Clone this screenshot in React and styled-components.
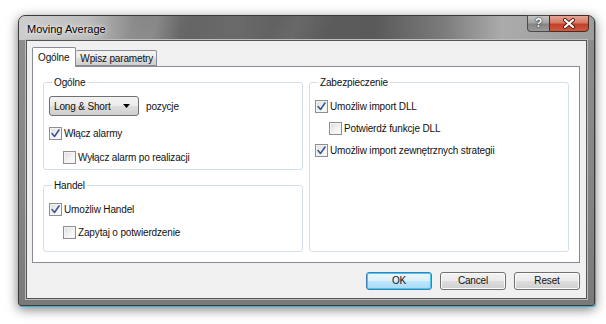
import React from 'react'
import styled, { createGlobalStyle } from 'styled-components';

const GlobalStyle = createGlobalStyle`
  html, body {
    margin: 0;
    background: #ffffff;
  }
  body {
    font-family: "Liberation Sans", Arial, sans-serif;
    font-size: 10px;
    letter-spacing: -0.15px;
    color: #111;
  }
`

const CheckMark = () => (
    <svg width="9" height="9" viewBox="0 0 9 9">
        <path d="M1 4.5 L3.5 7.5 L8 1" fill="none" stroke="#3c5894" strokeWidth="1.6" strokeLinecap="round" strokeLinejoin="round" />
    </svg>
)

const CheckBox = ({ checked, label, indent }) => (
    <CheckRow $indent={indent}>
        <Box>{checked && <CheckMark />}</Box>
        <span>{label}</span>
    </CheckRow>
)

const App = () => {
  return (
    <Page>
        <GlobalStyle />
        <Window>
            <TitleBar>
                <Title>Moving Average</Title>
                <CaptionButtons>
                    <HelpButton>?</HelpButton>
                    <CloseButton>
                        <svg width="14" height="11" viewBox="0 0 14 11">
                            <path d="M3 2 L11 9 M11 2 L3 9" stroke="#5a1a10" strokeWidth="4" strokeLinecap="round" />
                            <path d="M3 2 L11 9 M11 2 L3 9" stroke="#ffffff" strokeWidth="2.2" strokeLinecap="round" />
                        </svg>
                    </CloseButton>
                </CaptionButtons>
            </TitleBar>

            <Client>
                <TabStrip>
                    <Tab $active>Ogólne</Tab>
                    <Tab>Wpisz parametry</Tab>
                </TabStrip>

                <TabPanel>
                    <Column>
                        <Group $height={93} $pad={8} $gap={11}>
                            <legend>Ogólne</legend>
                            <ComboRow>
                                <Combo>
                                    <span>Long &amp; Short</span>
                                    <svg width="7" height="4" viewBox="0 0 7 4">
                                        <path d="M0 0 H7 L3.5 4 Z" fill="#000" />
                                    </svg>
                                </Combo>
                                <span>pozycje</span>
                            </ComboRow>
                            <CheckBox checked label="Włącz alarmy" />
                            <CheckBox indent label="Wyłącz alarm po realizacji" />
                        </Group>

                        <Group $height={72} $pad={12} $gap={10}>
                            <legend>Handel</legend>
                            <CheckBox checked label="Umożliw Handel" />
                            <CheckBox indent label="Zapytaj o potwierdzenie" />
                        </Group>
                    </Column>

                    <Column>
                        <Group $height={175} $pad={12} $gap={9}>
                            <legend>Zabezpieczenie</legend>
                            <CheckBox checked label="Umożliw import DLL" />
                            <CheckBox indent label="Potwierdź funkcje DLL" />
                            <CheckBox checked label="Umożliw import zewnętrznych strategii" />
                        </Group>
                    </Column>
                </TabPanel>

                <ButtonRow>
                    <Button $default>OK</Button>
                    <Button>Cancel</Button>
                    <Button>Reset</Button>
                </ButtonRow>
            </Client>
        </Window>
    </Page>
  )
}

export default App;

const Page = styled.div`
    width: 606px;
    height: 324px;
    box-sizing: border-box;
    padding: 15px 0 0 18px;
    overflow: hidden;
`

const Window = styled.div`
    width: 577px;
    height: 291px;
    box-sizing: border-box;
    display: flex;
    flex-direction: column;
    border: 1px solid #3a3a3a;
    border-radius: 7px 7px 3px 3px;
    background: linear-gradient(180deg, #8e8e8e 0%, #858585 60%, #7a7a7a 100%);
    box-shadow: 1px 1px 0 0 #3fb2d2, 0 3px 12px rgba(0, 0, 0, 0.55);
`

const TitleBar = styled.div`
    height: 24px;
    flex: none;
    display: flex;
    justify-content: space-between;
    align-items: flex-start;
    padding-left: 8px;
    border-radius: 6px 6px 0 0;
    background:
        linear-gradient(110deg, transparent 20%, rgba(255,255,255,0.12) 24%, transparent 30%, transparent 44%, rgba(255,255,255,0.08) 48%, transparent 54%),
        linear-gradient(90deg, #cdcdcd 0%, #bcbcbc 12%, #8a8a8a 20%, #646464 28%, #6a6a6a 38%, #5c5c5c 48%, #5a5a5a 62%, #7c7c7c 74%, #ababab 84%, #9c9c9c 100%);
`

const Title = styled.div`
    font-size: 11px;
    letter-spacing: 0;
    line-height: 24px;
    padding-top: 1px;
    color: #000;
    text-shadow: 0 0 6px rgba(255,255,255,0.9), 0 0 3px rgba(255,255,255,0.8);
`

const CaptionButtons = styled.div`
    display: flex;
    margin-right: 5px;
    margin-top: -1px;
`

const HelpButton = styled.div`
    width: 22px;
    height: 17px;
    box-sizing: border-box;
    border: 1px solid #4a4a4a;
    border-right: none;
    border-radius: 0 0 0 4px;
    background: linear-gradient(180deg, #c4c4c4 0%, #a4a4a4 45%, #858585 55%, #9a9a9a 100%);
    color: #fff;
    font-weight: bold;
    font-size: 12px;
    line-height: 15px;
    text-align: center;
    text-shadow: 0 0 2px #222, 0 0 1px #222;
`

const CloseButton = styled.div`
    width: 40px;
    height: 17px;
    box-sizing: border-box;
    border: 1px solid #4a2a24;
    border-radius: 0 0 4px 0;
    background: linear-gradient(180deg, #e4a494 0%, #d77a62 45%, #c2402a 55%, #cf5a3c 100%);
    display: grid;
    place-items: center;
`

const Client = styled.div`
    flex: 1;
    margin: 0 7px 6px 7px;
    display: flex;
    flex-direction: column;
    padding: 6px 6px 8px 5px;
    background: #f0f0f0;
    border: 1px solid #555;
    box-shadow: 0 0 0 1px #bdbdbd;
`

const TabStrip = styled.div`
    height: 19px;
    display: flex;
    align-items: flex-end;
    position: relative;
    z-index: 1;
`

const Tab = styled.div`
    box-sizing: border-box;
    height: ${(props) => (props.$active ? "20px" : "16px")};
    margin-bottom: ${(props) => (props.$active ? "-1px" : "0")};
    padding: ${(props) => (props.$active ? "3px 6px 0 5px" : "1px 3px 0 4px")};
    border: 1px solid #898c95;
    border-bottom: ${(props) => (props.$active ? "none" : "1px solid #898c95")};
    border-left: ${(props) => (props.$active ? "1px solid #898c95" : "none")};
    border-radius: 2px 2px 0 0;
    background: ${(props) => (props.$active ? "#ffffff" : "linear-gradient(180deg, #f3f3f3 0%, #ebebeb 50%, #dddddd 51%, #cfcfcf 100%)")};
    line-height: 13px;
`

const TabPanel = styled.div`
    width: 548px;
    height: 197px;
    box-sizing: border-box;
    border: 1px solid #898c95;
    background: #ffffff;
    padding: 10px 0 0 10px;
    display: grid;
    grid-template-columns: 260px 260px;
    column-gap: 6px;
    align-items: start;
`

const Column = styled.div`
    display: flex;
    flex-direction: column;
    gap: 10px;
`

const Group = styled.fieldset`
    box-sizing: border-box;
    height: ${(props) => props.$height}px;
    margin: 0;
    min-width: 0;
    padding: ${(props) => props.$pad}px 5px 0 5px;
    border: 1px solid #d5dfe5;
    border-radius: 3px;
    display: flex;
    flex-direction: column;
    align-items: flex-start;
    gap: ${(props) => props.$gap}px;

    legend {
        padding: 0 2px;
        margin-left: 3px;
        font-size: 10px;
        line-height: 11px;
    }
`

const ComboRow = styled.div`
    display: flex;
    align-items: center;
    gap: 7px;
    height: 20px;
`

const Combo = styled.div`
    width: 90px;
    height: 20px;
    box-sizing: border-box;
    border: 1px solid #707070;
    border-radius: 3px;
    background: linear-gradient(180deg, #f2f2f2 0%, #ebebeb 50%, #dddddd 51%, #cfcfcf 100%);
    display: flex;
    align-items: center;
    justify-content: space-between;
    padding: 0 8px 0 4px;
`

const CheckRow = styled.div`
    display: flex;
    align-items: center;
    gap: 2px;
    height: 13px;
    margin-left: ${(props) => (props.$indent ? "14px" : "0")};
    white-space: nowrap;
`

const Box = styled.div`
    width: 13px;
    height: 13px;
    box-sizing: border-box;
    border: 1px solid #8f8f8f;
    background: linear-gradient(135deg, #dcdcdc 0%, #f4f4f4 60%, #ffffff 100%);
    box-shadow: inset 0 0 0 1px #f4f4f4;
    display: grid;
    place-items: center;
`

const ButtonRow = styled.div`
    display: flex;
    justify-content: flex-end;
    gap: 8px;
    margin-top: 9px;
`

const Button = styled.div`
    width: 66px;
    height: 18px;
    box-sizing: border-box;
    border: 1px solid ${(props) => (props.$default ? "#3c7fb1" : "#707070")};
    border-radius: 3px;
    background: ${(props) => (props.$default
        ? "linear-gradient(180deg, #eaf6fd 0%, #d9f0fc 50%, #bee6fd 51%, #a7d9f5 100%)"
        : "linear-gradient(180deg, #f2f2f2 0%, #ebebeb 50%, #dddddd 51%, #cfcfcf 100%)")};
    box-shadow: ${(props) => (props.$default ? "inset 0 0 0 1px #48c6f5" : "inset 0 0 0 1px #fcfcfc")};
    text-align: center;
    line-height: 16px;
`
